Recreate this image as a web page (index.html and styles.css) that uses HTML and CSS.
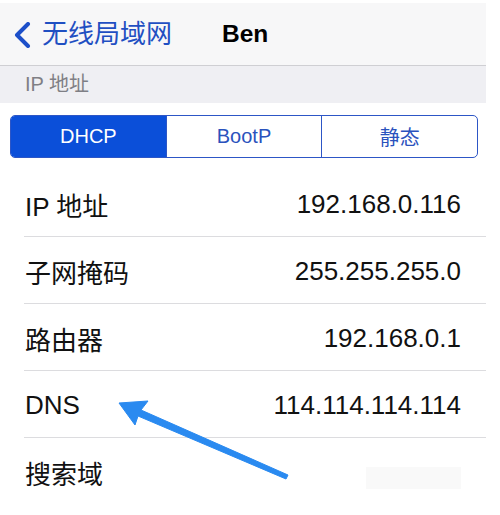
FILE: index.html
```html
<!DOCTYPE html>
<html>
<head>
<meta charset="utf-8">
<link rel="stylesheet" href="styles.css">
</head>
<body>
<div class="page">
  <div class="nav">
    <div class="back">
      <svg class="chev" width="20" height="26" viewBox="0 0 20 26"><path d="M15 2 L4 13 L15 24" fill="none" stroke="#1c4fc9" stroke-width="4" stroke-linecap="round" stroke-linejoin="round"/></svg>
      <span class="back-text">无线局域网</span>
    </div>
    <div class="title">Ben</div>
  </div>
  <div class="section">IP 地址</div>
  <div class="seg-wrap">
    <div class="seg">
      <div class="seg-item active">DHCP</div>
      <div class="seg-item">BootP</div>
      <div class="seg-item">静态</div>
    </div>
  </div>
  <div class="list">
    <div class="row"><span class="label">IP 地址</span><span class="value">192.168.0.116</span></div>
    <div class="row"><span class="label">子网掩码</span><span class="value">255.255.255.0</span></div>
    <div class="row"><span class="label">路由器</span><span class="value">192.168.0.1</span></div>
    <div class="row"><span class="label">DNS</span><span class="value">114.114.114.114</span></div>
    <div class="row last"><span class="label">搜索域</span><span class="smudge"></span></div>
  </div>
</div>
<svg class="arrow" width="500" height="515" viewBox="0 0 500 515">
  <path d="M119 403 L148 401 L141 410 L288 475 L286 479 L138 416 L135 425 Z" fill="#2a8af0" stroke="#2a8af0" stroke-width="1" stroke-linejoin="round"/>
</svg>
</body>
</html>
```
FILE: styles.css
```css
html, body {
  margin: 0;
  padding: 0;
  background: #ffffff;
}
body {
  width: 500px;
  height: 515px;
  overflow: hidden;
  position: relative;
  font-family: "Liberation Sans", "Noto Sans CJK SC", sans-serif;
}
.page {
  width: 486px;
  padding-top: 3px;
}
.nav {
  height: 63px;
  background: #f7f7f8;
  border-bottom: 1px solid #cfcfd3;
  display: flex;
  align-items: center;
  box-sizing: border-box;
  padding-left: 13px;
}
.back {
  display: flex;
  align-items: center;
  gap: 9px;
  color: #1f4fc2;
  font-size: 26px;
}
.chev {
  display: block;
  margin-top: 1px;
}
.back-text {
  line-height: 1;
}
.title {
  margin-left: 50px;
  font-size: 24.5px;
  font-weight: bold;
  color: #000;
}
.section {
  height: 37px;
  background: #efeff3;
  color: #7f7f85;
  font-size: 20px;
  padding-left: 25px;
  display: flex;
  align-items: center;
  padding-bottom: 5px;
  box-sizing: border-box;
}
.seg-wrap {
  padding: 12px 8px 12px 10px;
}
.seg {
  display: flex;
  height: 43px;
  border: 1.5px solid #2d56c6;
  border-radius: 5px;
  overflow: hidden;
  box-sizing: border-box;
}
.seg-item {
  flex: 1;
  display: flex;
  align-items: center;
  justify-content: center;
  font-size: 20px;
  color: #2a52bd;
  border-left: 1.5px solid #2d56c6;
}
.seg-item:first-child {
  border-left: none;
}
.seg-item.active {
  background: #0b4fd9;
  color: #ffffff;
}
.list {
  padding-left: 24px;
}
.row {
  height: 67px;
  border-bottom: 1px solid #dcdcdf;
  display: flex;
  align-items: center;
  justify-content: space-between;
  padding: 2px 25px 0 1px;
  box-sizing: border-box;
  font-size: 26px;
  color: #111;
}
.row.last {
  border-bottom: none;
}
.value {
  color: #111;
}
.smudge {
  width: 95px;
  height: 22px;
  background: #f9f9f9;
  margin-top: 10px;
}
.arrow {
  position: absolute;
  left: 0;
  top: 0;
  pointer-events: none;
}
```
